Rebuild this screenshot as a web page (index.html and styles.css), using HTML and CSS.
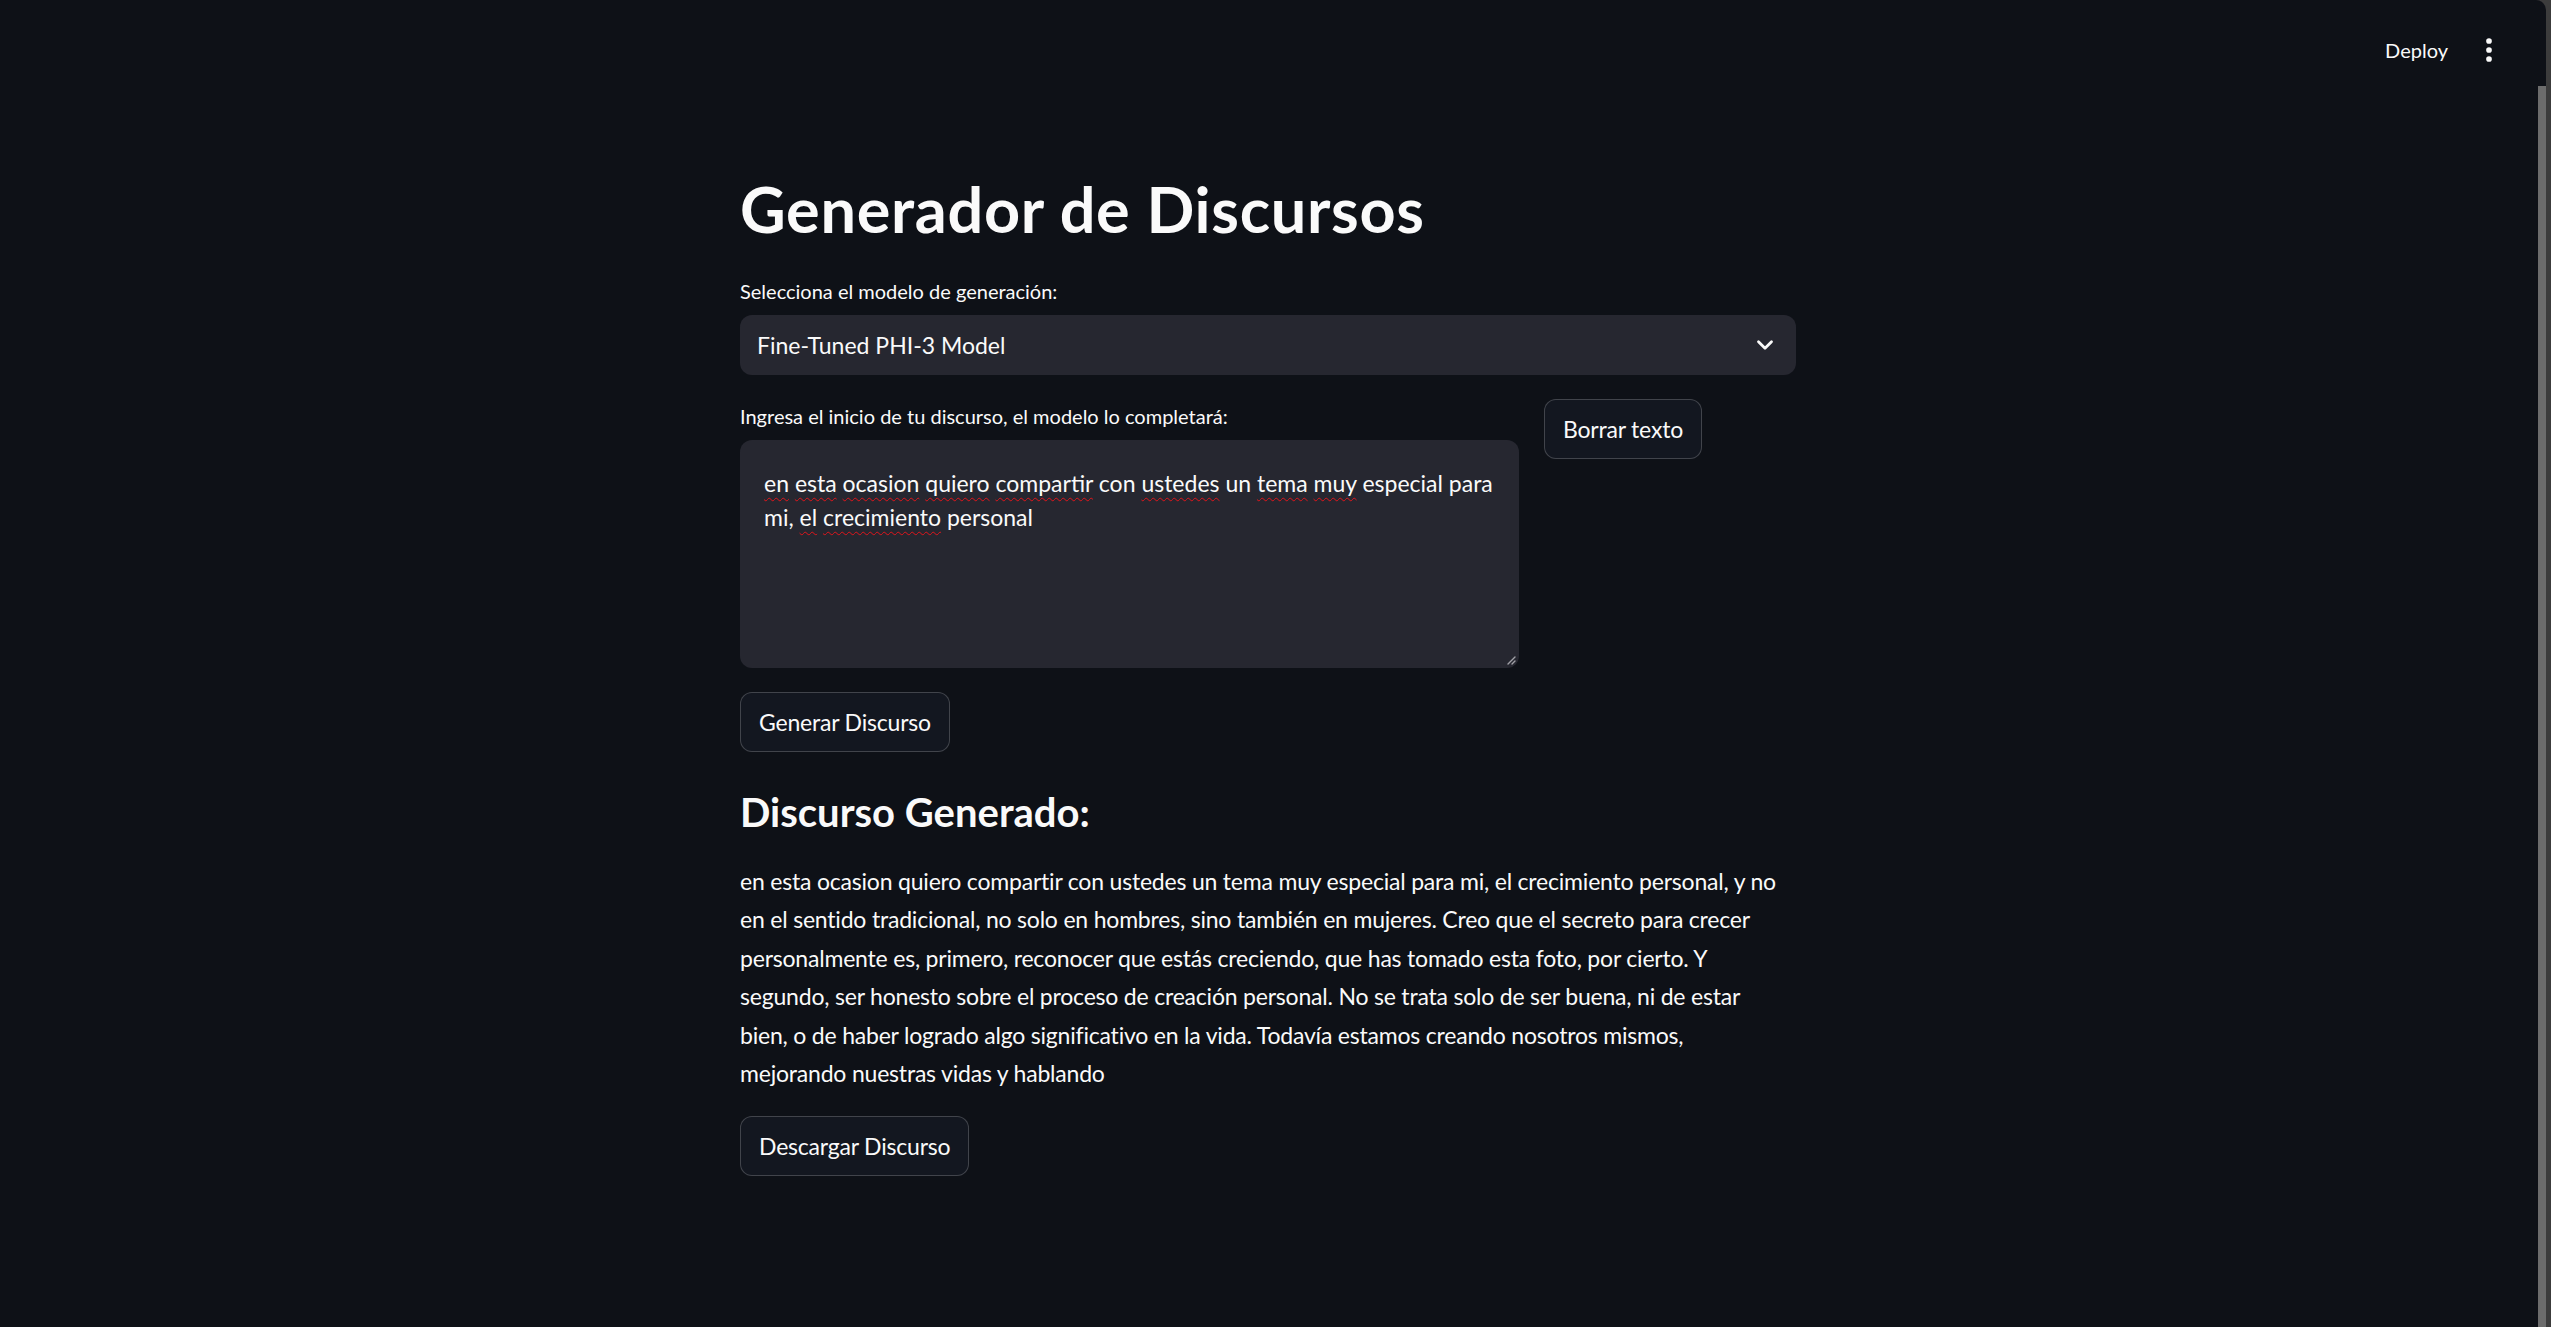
FILE: index.html
```html
<!DOCTYPE html>
<html lang="es">
<head>
<meta charset="utf-8">
<title>Generador de Discursos</title>
<link rel="stylesheet" href="styles.css">
</head>
<body>
<div class="app">
  <header class="topbar">
    <span class="deploy">Deploy</span>
    <svg class="kebab" width="36" height="36" viewBox="0 0 24 24" aria-hidden="true">
      <circle cx="12" cy="6" r="1.9" fill="#fafafa"/>
      <circle cx="12" cy="12" r="1.9" fill="#fafafa"/>
      <circle cx="12" cy="18" r="1.9" fill="#fafafa"/>
    </svg>
  </header>
  <main class="main">
    <div class="block">
      <h1 class="title">Generador de Discursos</h1>
      <div class="field">
        <label class="label">Selecciona el modelo de generación:</label>
        <div class="select">
          <span>Fine-Tuned PHI-3 Model</span>
          <svg class="chevron" width="18" height="12" viewBox="0 0 18 12" aria-hidden="true">
            <path d="M2.5 2.8 L9 9.2 L15.5 2.8" fill="none" stroke="#fafafa" stroke-width="2.8" stroke-linecap="round" stroke-linejoin="round"/>
          </svg>
        </div>
      </div>
      <div class="row">
        <div class="field">
          <label class="label">Ingresa el inicio de tu discurso, el modelo lo completará:</label>
          <div class="textarea"><span class="sp">en</span> <span class="sp">esta</span> <span class="sp">ocasion</span> <span class="sp">quiero</span> <span class="sp">compartir</span> con <span class="sp">ustedes</span> un <span class="sp">tema</span> <span class="sp">muy</span> especial para mi, <span class="sp">el</span> <span class="sp">crecimiento</span> personal<svg class="resize" width="10" height="10" viewBox="0 0 10 10" aria-hidden="true"><path d="M9 2 L2 9 M9 6 L6 9" stroke="#a0a0a6" stroke-width="1.4" stroke-linecap="round"/></svg></div>
        </div>
        <div class="side">
          <button class="btn">Borrar texto</button>
        </div>
      </div>
      <div class="btnwrap"><button class="btn">Generar Discurso</button></div>
      <h3 class="subtitle">Discurso Generado:</h3>
      <p class="para">en esta ocasion quiero compartir con ustedes un tema muy especial para mi, el crecimiento personal, y no en el sentido tradicional, no solo en hombres, sino también en mujeres. Creo que el secreto para crecer personalmente es, primero, reconocer que estás creciendo, que has tomado esta foto, por cierto. Y segundo, ser honesto sobre el proceso de creación personal. No se trata solo de ser buena, ni de estar bien, o de haber logrado algo significativo en la vida. Todavía estamos creando nosotros mismos, mejorando nuestras vidas y hablando</p>
      <div class="btnwrap"><button class="btn">Descargar Discurso</button></div>
    </div>
  </main>
  <div class="thumb"></div>
</div>
</body>
</html>
```

FILE: styles.css
```css
html, body {
  margin: 0;
  height: 100%;
}

body {
  background: #3c3c3c;
  font-family: Lato, "Liberation Sans", sans-serif;
  color: #fafafa;
  overflow: hidden;
}

.app {
  position: relative;
  height: 1327px;
  margin-right: 5px;
  background: #0e1117;
  border-top-right-radius: 10px;
  overflow: hidden;
}

.topbar {
  height: 100px;
  display: flex;
  justify-content: flex-end;
  align-items: center;
  gap: 23px;
  padding-right: 39px;
}

.deploy {
  font-size: 20px;
  line-height: 30px;
}

.kebab {
  display: block;
}

.main {
  padding-right: 10px;
}

.block {
  width: 1056px;
  margin: 0 auto;
  padding-top: 71px;
  display: flex;
  flex-direction: column;
  gap: 24px;
}

.title {
  margin: 0 0 3px;
  font-size: 63px;
  line-height: 76px;
  font-weight: 700;
  letter-spacing: 0.7px;
}

.label {
  display: block;
  font-size: 20px;
  line-height: 34px;
  height: 34px;
  margin-bottom: 7px;
}

.select {
  height: 60px;
  box-sizing: border-box;
  border-radius: 12px;
  background: #262730;
  display: flex;
  align-items: center;
  justify-content: space-between;
  padding: 0 22px 0 17px;
  font-size: 23px;
}

.chevron {
  display: block;
}

.row {
  display: grid;
  grid-template-columns: 779px 1fr;
  gap: 25px;
  align-items: start;
}

.textarea {
  position: relative;
  height: 228px;
  box-sizing: border-box;
  padding: 27px 24px 24px;
  background: #262730;
  border-radius: 12px;
  font-size: 23px;
  line-height: 33.6px;
}

.sp {
  text-decoration: underline wavy #e0151b;
  text-decoration-thickness: 1px;
  text-underline-offset: 5px;
}

.resize {
  position: absolute;
  right: 3px;
  bottom: 3px;
}

.btnwrap {
  display: flex;
}

.btn {
  height: 60px;
  box-sizing: border-box;
  padding: 0 18px;
  border: 1px solid rgba(250, 250, 250, 0.2);
  border-radius: 12px;
  background: #131720;
  color: #fafafa;
  font-family: inherit;
  font-size: 23px;
  letter-spacing: -0.2px;
}

.subtitle {
  margin: 12px 0 2px;
  font-size: 40px;
  line-height: 48px;
  font-weight: 700;
}

.para {
  margin: 0;
  max-width: 1045px;
  font-size: 23px;
  line-height: 38.4px;
  letter-spacing: -0.2px;
}

.thumb {
  position: absolute;
  right: 0;
  top: 86px;
  width: 8px;
  height: 1300px;
  background: #6c6c6c;
}
```
